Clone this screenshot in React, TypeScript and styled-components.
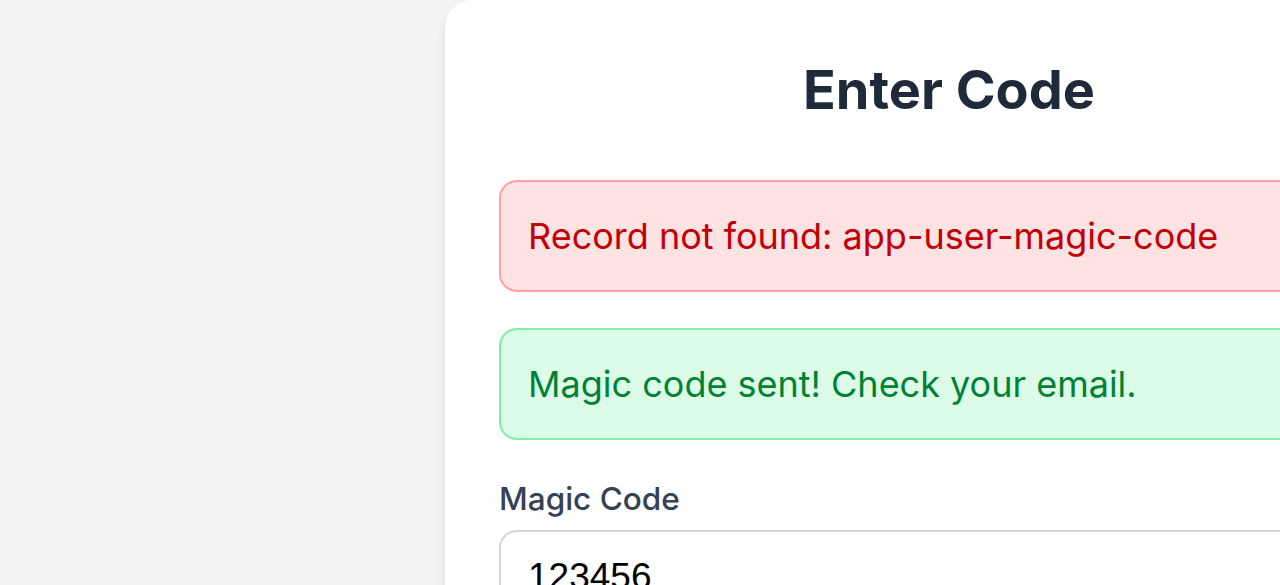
import styled, { createGlobalStyle } from "styled-components";

const GlobalStyle = createGlobalStyle`
    html, body {
        margin: 0;
        padding: 0;
        background: #f3f4f6;
        overflow: hidden;
    }
    body {
        font-family: Inter, "Noto Sans", sans-serif;
    }
`;

type Tone = "error" | "success";

const tones = {
    error: { bg: "#ffe2e2", border: "#ffa2a2", color: "#c10007" },
    success: { bg: "#dcfce7", border: "#7bf1a8", color: "#008236" },
};

export default function App() {
    return (
        <>
            <GlobalStyle />
            <Page>
                <Card>
                    <Title>Enter Code</Title>
                    <Alert $tone="error">Record not found: app-user-magic-code</Alert>
                    <Alert $tone="success">Magic code sent! Check your email.</Alert>
                    <Field>
                        <Label htmlFor="code">Magic Code</Label>
                        <Input id="code" defaultValue="123456" />
                    </Field>
                </Card>
            </Page>
        </>
    );
}

const Page = styled.div`
    min-height: 585px;
    padding-left: 445px;
`;

const Card = styled.div`
    width: 1008px;
    box-sizing: border-box;
    padding: 54px;
    background: #fff;
    border-radius: 27px;
    box-shadow: 0 9px 14px -2px rgba(0, 0, 0, 0.1), 0 4px 9px -4px rgba(0, 0, 0, 0.1);
`;

const Title = styled.h2`
    margin: 0 0 54px;
    text-align: center;
    font-size: 54px;
    line-height: 72px;
    font-weight: 700;
    color: #1e2939;
`;

const Alert = styled.div<{ $tone: Tone }>`
    margin-bottom: 36px;
    padding: 27px;
    border: 2px solid ${(p) => tones[p.$tone].border};
    border-radius: 18px;
    background: ${(p) => tones[p.$tone].bg};
    color: ${(p) => tones[p.$tone].color};
    font-size: 36px;
    line-height: 54px;
`;

const Field = styled.div`
    display: flex;
    flex-direction: column;
    gap: 9px;
`;

const Label = styled.label`
    font-size: 31.5px;
    line-height: 45px;
    font-weight: 500;
    color: #364153;
`;

const Input = styled.input`
    box-sizing: border-box;
    width: 100%;
    padding: 18px 27px;
    border: 2px solid #d1d5dc;
    border-radius: 18px;
    font-family: "Liberation Sans", Arial, sans-serif;
    font-size: 37px;
    line-height: 54px;
    color: #000;
    outline: none;
`;
